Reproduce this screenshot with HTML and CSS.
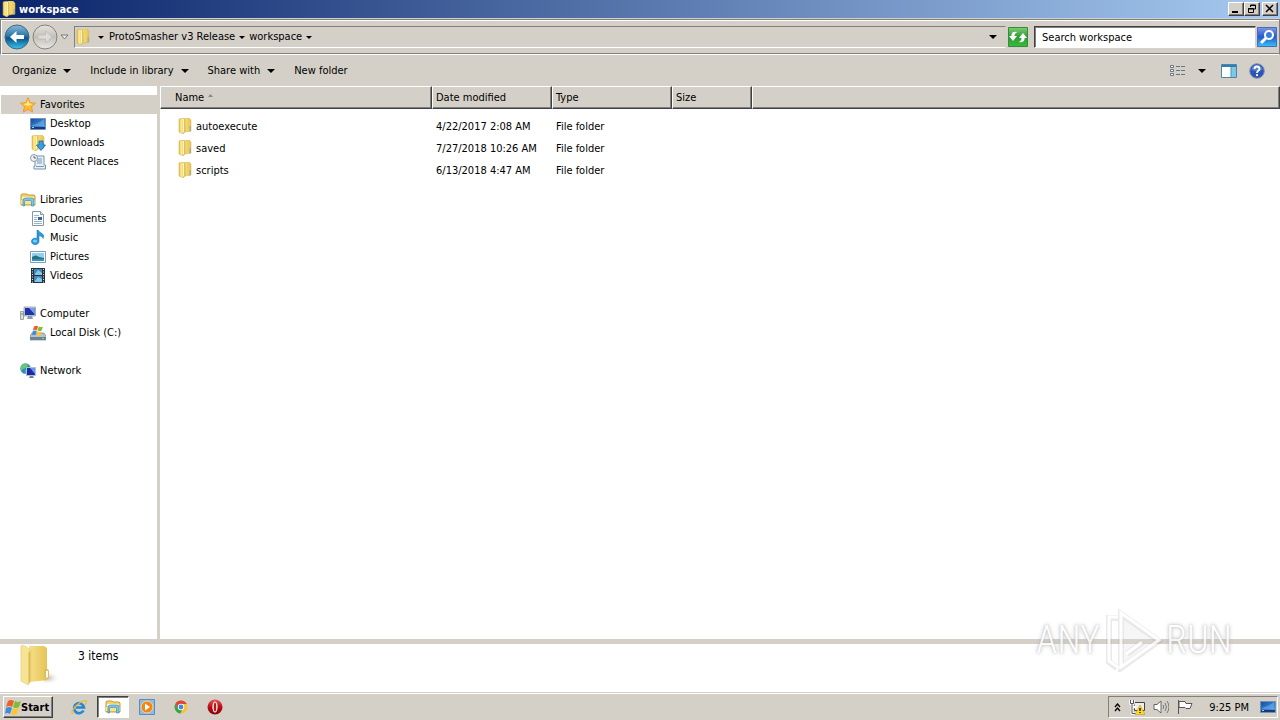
FILE: index.html
```html
<!DOCTYPE html>
<html lang="en">
<head>
<meta charset="utf-8">
<title>workspace</title>
<link rel="stylesheet" href="styles.css">
</head>
<body>
<svg class="defs" aria-hidden="true">
  <defs>
    <linearGradient id="gold" x1="0" x2="1"><stop offset="0" stop-color="#e3bd3c"/><stop offset=".35" stop-color="#fbeb9c"/><stop offset="1" stop-color="#e8c548"/></linearGradient>
    <linearGradient id="goldSoft" x1="0" x2="1"><stop offset="0" stop-color="#f6e08a"/><stop offset="1" stop-color="#e6c355"/></linearGradient>
    <linearGradient id="screen" x1="0" x2="1" y2="1"><stop offset="0" stop-color="#174a9c"/><stop offset="1" stop-color="#56a5ee"/></linearGradient>
    <linearGradient id="green" x1="0" x2="0" y2="1"><stop offset="0" stop-color="#7fcb74"/><stop offset=".5" stop-color="#2c9e34"/><stop offset="1" stop-color="#35bd3b"/></linearGradient>
    <linearGradient id="find" x1="0" x2="0" y2="1"><stop offset="0" stop-color="#8197e6"/><stop offset=".5" stop-color="#2459cf"/><stop offset="1" stop-color="#35c3f5"/></linearGradient>
    <linearGradient id="backFill" x1="0" x2="0" y2="1"><stop offset="0" stop-color="#8db9d6"/><stop offset=".45" stop-color="#2c77ab"/><stop offset=".55" stop-color="#0c5288"/><stop offset="1" stop-color="#39c8ee"/></linearGradient>
    <linearGradient id="fwdFill" x1="0" x2="0" y2="1"><stop offset="0" stop-color="#e6e4e0"/><stop offset=".5" stop-color="#c3c0bb"/><stop offset="1" stop-color="#e9e7e3"/></linearGradient>
    <radialGradient id="shade"><stop offset="0" stop-color="#8f8f8f" stop-opacity=".6"/><stop offset="1" stop-color="#fff" stop-opacity="0"/></radialGradient>
    <linearGradient id="red" x1="0" x2="0" y2="1"><stop offset="0" stop-color="#e8575a"/><stop offset=".5" stop-color="#b90d14"/><stop offset="1" stop-color="#8d0006"/></linearGradient>
  </defs>
  <symbol id="folder" viewBox="0 0 16 16"><path d="M7 0h5l2 2v11l-6 1z" fill="url(#goldSoft)" stroke="#d9b545" stroke-width=".5"/><path d="M2 1l4-1 2 2v12l-2 2-4-2z" fill="url(#gold)" stroke="#cfaa3b" stroke-width=".5"/><path d="M6.500 1v13" stroke="#fff6c6"/><path d="M12.500 8h1.500v5l-1.500 1z" fill="#a9ad92"/></symbol>
  <symbol id="star" viewBox="0 0 16 16"><path d="M8 .7l2.200 4.900 5.300.6-4 3.500 1.200 5.400L8 12.400l-4.700 2.700 1.200-5.400-4-3.500 5.300-.6z" fill="#ffba32" stroke="#e69a3c"/><path d="M8 3l1.500 3.500 3.500.5-5 2-5-2 3.500-.5z" fill="#ffe783"/></symbol>
  <symbol id="desktop" viewBox="0 0 16 16"><path d="M.5 2.500h15v11H.5z" fill="url(#screen)" stroke="#6f93bd"/><path d="M1 11h14v2H1z" fill="#1c3970"/><path d="M2 11h2v1H2z" fill="#8fd6ff"/><path d="M2 9q6-1 12-6v7H2z" fill="#6ebcf6" opacity=".5"/></symbol>
  <symbol id="download" viewBox="0 0 16 16"><use href="#folder"/><path d="M9 6h4v4h2.500L11 15.500 6.500 10H9z" fill="#37a1e4" stroke="#1567a9" stroke-width=".8"/></symbol>
  <symbol id="recent" viewBox="0 0 16 16"><path d="M5 2h9v9h1.500v4H4v-3h1z" fill="#e8f0f6" stroke="#7793ad"/><path d="M7 5h5M7 7h5M7 9h5M6 12.500h8" stroke="#7399b7"/><circle cx="4" cy="4" r="3.500" fill="#eef2f5" stroke="#8a9aa8"/><path d="M4 2v2h2" fill="none" stroke="#526b80"/></symbol>
  <symbol id="library" viewBox="0 0 16 16"><path d="M1 3l1-1h5l1 1h6l1 1v9H1z" fill="#f2d36c" stroke="#c69d32"/><path d="M2 5h12v2H2z" fill="#fff7ca"/><path d="M1 8h14v4H1z" fill="#f8e28e"/><path d="M4.500 14V9.500q0-1 1-1h5q1 0 1 1V14H14V8q0-2-2-2H6Q3 6 3 8v6z" fill="#78c6ef" stroke="#2c83bb" stroke-width=".6"/></symbol>
  <symbol id="document" viewBox="0 0 16 16"><path d="M2.500.5h8l3 3v11h-11z" fill="#fff" stroke="#8497a7"/><path d="M10.500.5v3h3" fill="#dce7ef" stroke="#8497a7"/><path d="M4 4.500h5M4 6.500h3M4 8.500h3M4 10.500h8M4 12.500h8" stroke="#9ab4cc"/><path d="M8 6h4v3H8z" fill="#2f679e"/></symbol>
  <symbol id="music" viewBox="0 0 16 16"><path d="M8 0q1 2 4 3.500 3 2 1 5 0-2-4-3v6a3.800 3.300 0 1 1-2-3V0z" fill="#2998dc" stroke="#126aad" stroke-width=".5"/><ellipse cx="5" cy="11" rx="2" ry="1.500" fill="#7bd0f8"/></symbol>
  <symbol id="picture" viewBox="0 0 16 16"><path d="M.5 2.500h15v11H.5z" fill="#fff" stroke="#859aad"/><path d="M2 4h12v8H2z" fill="#8fd0ef"/><path d="M2 8q4-3 7 0l5 1v3H2z" fill="#267184"/><path d="M2 10h12v2H2z" fill="#2d96bf"/></symbol>
  <symbol id="video" viewBox="0 0 16 16"><path d="M1 0h14v15H1z" fill="#24303c"/><path d="M4 1h8v6H4zM4 8h8v6H4z" fill="#3e87bf"/><path d="M5 6l3-4 4 3v2H5zM5 13l3-4 4 2v3H5z" fill="#87c7e6"/><path d="M2.500 1v14M13.500 1v14" stroke="#dde3e8" stroke-dasharray="1 1.500"/></symbol>
  <symbol id="computer" viewBox="0 0 16 16"><path d="M.5 5.500h3v8h-3z" fill="#d9dedb" stroke="#9ba5a2"/><path d="M1 8h2" stroke="#3fa948"/><path d="M4 1h11.500v9H4z" fill="#ced5dd" stroke="#78848f" stroke-width=".6"/><path d="M5 2h9.500v7H5z" fill="#202fae"/><path d="M9 2h5.500v6z" fill="#6fa1ef"/><path d="M8 10h4l1 3H7z" fill="#8c9aab"/></symbol>
  <symbol id="flag" viewBox="0 0 16 16"><path d="M3 2q3-2 6 0L7 8Q4 6 1 8z" fill="#ed6224"/><path d="M10 2q3 2 6 0l-2 6q-3 2-6 0z" fill="#7cbd3b"/><path d="M1 9q3-2 6 0l-2 6q-3-2-5 0z" fill="#3d8ce4"/><path d="M8 9q3 2 6 0l-2 6q-3 2-6 0z" fill="#fbc72f"/></symbol>
  <symbol id="disk" viewBox="0 0 16 16"><path d="M2 8h12l2 3v4H0v-4z" fill="#b8c2ca" stroke="#65737f" stroke-width=".6"/><path d="M0 12h16v3H0z" fill="#6e8391"/><path d="M12 13h2v1h-2z" fill="#61e26c"/><use href="#flag" x="2" width="11" height="11"/></symbol>
  <symbol id="network" viewBox="0 0 16 16"><circle cx="5.500" cy="5.500" r="5.200" fill="#2c8dcb"/><path d="M2 2q4-3 6 0L6 5 3 6 1 8q-1-3 1-6zM5 7l3 1-2 3z" fill="#68c86c"/><path d="M6.500 4.500h9v8h-9z" fill="#1a2ba3" stroke="#b2c0d0"/><path d="M10 5h5v6z" fill="#6997ef"/><path d="M10 13h3l1 2H9z" fill="#718193"/></symbol>
  <symbol id="arrow" viewBox="0 0 8 4"><path d="M0 0h8L4 4z" fill="#000"/></symbol>
</svg>

<div class="window">
  <header class="titlebar">
    <svg class="icon"><use href="#folder"/></svg>
    <h1 class="title">workspace</h1>
    <div class="caption-buttons">
      <button class="caption" aria-label="Minimize"><svg width="12" height="10"><path d="M2 8h6" stroke="#000" stroke-width="2"/></svg></button>
      <button class="caption" aria-label="Restore"><svg width="12" height="10"><path d="M4.500 3V1h5v4H8M4 1.500h6M2.500 4.500h5v4h-5zM2 5h6" fill="none" stroke="#000"/></svg></button>
      <button class="caption caption-close" aria-label="Close"><svg width="12" height="10"><path d="M2 1l7 7M9 1L2 8" stroke="#000" stroke-width="1.500"/></svg></button>
    </div>
  </header>

  <div class="address-row">
    <button class="plain" aria-label="Back"><svg width="26" height="26"><circle cx="13" cy="13" r="12" fill="url(#backFill)" stroke="#3c6889"/><path d="M6 13l6.500-6v4H20v4h-7.500v4z" fill="#fff"/></svg></button>
    <button class="plain" aria-label="Forward"><svg width="26" height="26"><circle cx="13" cy="13" r="12" fill="url(#fwdFill)" stroke="#85827d"/><path d="M20 13l-6.500-6v4H6v4h7.500v4z" fill="#dedcd7" stroke="#b7b4af" stroke-width=".6"/></svg></button>
    <button class="plain history" aria-label="Recent pages"><svg width="9" height="6"><path d="M1 1h7L4.500 5z" fill="#eee" stroke="#777"/></svg></button>
    <nav class="breadcrumb" aria-label="Address">
      <svg class="icon"><use href="#folder"/></svg>
      <button class="plain crumb-arrow" aria-label="Root"><svg class="small-arrow"><use href="#arrow"/></svg></button>
      <a class="crumb" href="#">ProtoSmasher v3 Release</a>
      <button class="plain crumb-arrow" aria-label="Subfolders of ProtoSmasher v3 Release"><svg class="small-arrow"><use href="#arrow"/></svg></button>
      <a class="crumb" href="#">workspace</a>
      <button class="plain crumb-arrow" aria-label="Subfolders of workspace"><svg class="small-arrow"><use href="#arrow"/></svg></button>
      <button class="plain address-drop" aria-label="Previous locations"><svg class="big-arrow"><use href="#arrow"/></svg></button>
    </nav>
    <button class="plain refresh" aria-label="Refresh"><svg width="20" height="20"><path d="M.5.5h19v19H.5z" fill="url(#green)" stroke="#388a3c"/><path d="M1 9l4 5 4-5H6.500q0-3 3-4Q3 4 3.500 9zM19 11l-4-5-4 5h2.500q0 3-3 4 6.500 1 6-4z" fill="#fff"/></svg></button>
    <input class="search" type="text" aria-label="Search" value="Search workspace">
    <button class="plain find" aria-label="Start search"><svg width="20" height="20"><path d="M.5.5h19v19H.5z" fill="url(#find)" stroke="#466cc2"/><path d="M9 11l-5 5" stroke="#fff" stroke-width="3"/><circle cx="12" cy="8" r="4" fill="#397ddc" stroke="#fff" stroke-width="2"/></svg></button>
  </div>

  <div class="toolbar">
    <button class="plain tool">Organize <svg class="big-arrow"><use href="#arrow"/></svg></button>
    <button class="plain tool">Include in library <svg class="big-arrow"><use href="#arrow"/></svg></button>
    <button class="plain tool">Share with <svg class="big-arrow"><use href="#arrow"/></svg></button>
    <button class="plain tool">New folder</button>
    <div class="view-tools">
      <button class="plain" aria-label="Change your view"><svg width="16" height="14"><path d="M.5 1.500h3v2h-3zM.5 5.500h3v2h-3zM.5 9.500h3v2h-3z" fill="#fff" stroke="#66758a"/><path d="M6 2.500h4m1 0h4M6 6.500h4m1 0h4M6 10.500h4m1 0h4" stroke="#66758a"/></svg></button>
      <button class="plain view-drop" aria-label="More view options"><svg class="big-arrow"><use href="#arrow"/></svg></button>
      <button class="plain preview" aria-label="Show the preview pane"><svg width="16" height="14"><path d="M.5.5h15v13H.5z" fill="#fff" stroke="#4a84a8"/><path d="M1 2h14" stroke="#347caf" stroke-width="2"/><path d="M10 3h5v10h-5z" fill="#7fc7e8"/><path d="M10 3v10" stroke="#4a94bb"/></svg></button>
      <button class="plain help" aria-label="Help"><svg width="16" height="16"><circle cx="8" cy="8" r="7.300" fill="#2855b8" stroke="#8393b0"/><path d="M2.500 7a5.500 5 0 0 1 11 0q-5 2-11 0z" fill="#7b9fe3" opacity=".6"/><path d="M5.500 6q0-2.500 2.500-2.500T10.500 6Q10.500 7 9 8q-1 .7-1 2" fill="none" stroke="#fff" stroke-width="1.800"/><path d="M7 11.300h2v1.700H7z" fill="#fff"/></svg></button>
    </div>
  </div>

  <main class="content">
    <nav class="tree" aria-label="Folders">
      <ul class="group">
        <li><a class="node root selected" href="#"><svg class="icon"><use href="#star"/></svg>Favorites</a></li>
        <li><a class="node" href="#"><svg class="icon"><use href="#desktop"/></svg>Desktop</a></li>
        <li><a class="node" href="#"><svg class="icon"><use href="#download"/></svg>Downloads</a></li>
        <li><a class="node" href="#"><svg class="icon"><use href="#recent"/></svg>Recent Places</a></li>
      </ul>
      <ul class="group">
        <li><a class="node root" href="#"><svg class="icon"><use href="#library"/></svg>Libraries</a></li>
        <li><a class="node" href="#"><svg class="icon"><use href="#document"/></svg>Documents</a></li>
        <li><a class="node" href="#"><svg class="icon"><use href="#music"/></svg>Music</a></li>
        <li><a class="node" href="#"><svg class="icon"><use href="#picture"/></svg>Pictures</a></li>
        <li><a class="node" href="#"><svg class="icon"><use href="#video"/></svg>Videos</a></li>
      </ul>
      <ul class="group">
        <li><a class="node root" href="#"><svg class="icon"><use href="#computer"/></svg>Computer</a></li>
        <li><a class="node" href="#"><svg class="icon"><use href="#disk"/></svg>Local Disk (C:)</a></li>
      </ul>
      <ul class="group">
        <li><a class="node root" href="#"><svg class="icon"><use href="#network"/></svg>Network</a></li>
      </ul>
    </nav>

    <section class="files">
      <table class="list">
        <colgroup><col class="col-name"><col class="col-mid"><col class="col-mid"><col class="col-size"><col></colgroup>
        <thead>
          <tr><th class="name-head">Name <svg class="sort" width="5" height="3"><path d="M0 3h5L2.500 0z" fill="#8c8982"/></svg></th><th>Date modified</th><th>Type</th><th>Size</th><th></th></tr>
        </thead>
        <tbody>
          <tr><td><a class="file" href="#"><svg class="icon"><use href="#folder"/></svg>autoexecute</a></td><td>4/22/2017 2:08 AM</td><td>File folder</td><td></td><td></td></tr>
          <tr><td><a class="file" href="#"><svg class="icon"><use href="#folder"/></svg>saved</a></td><td>7/27/2018 10:26 AM</td><td>File folder</td><td></td><td></td></tr>
          <tr><td><a class="file" href="#"><svg class="icon"><use href="#folder"/></svg>scripts</a></td><td>6/13/2018 4:47 AM</td><td>File folder</td><td></td><td></td></tr>
        </tbody>
      </table>
    </section>
  </main>

  <section class="details">
    <svg width="42" height="44" viewBox="0 0 42 44"><ellipse cx="29" cy="34" rx="12" ry="7" fill="url(#shade)"/><path d="M10 2h15l3 2v32l-17 2z" fill="url(#goldSoft)"/><path d="M25 25q5-1 5 3v6l-4 3z" fill="#e0bd55"/><path d="M27 27h2v6l-2 1z" fill="#fff"/><path d="M2 2l2-1 8 5v31l-3 4-7-4z" fill="#f7e394" stroke="#ecd27c" stroke-width=".8"/><path d="M11.500 6v31l-2 3V9z" fill="#dcb94f"/></svg>
    <p class="count">3 items</p>
  </section>

  <div class="watermark">
    <span>ANY</span>
    <svg width="60" height="64"><path d="M18 6l38 27-38 27zM16 10H6v44l8 6M24 46l16-12" fill="none" stroke="#999" stroke-width="6" opacity=".25"/><path d="M20 8l34 24-34 24z" fill="#ddd" opacity=".3"/><path d="M18 5l38 27-38 27zM15 9H6v44l10 7M23 46l16-12" fill="none" stroke="#fff" stroke-width="3"/></svg>
    <span>RUN</span>
  </div>
</div>

<footer class="taskbar">
  <button class="start"><svg class="icon"><use href="#flag"/></svg>Start</button>
  <div class="launch">
    <button class="plain task" aria-label="Internet Explorer"><svg class="icon" viewBox="0 0 16 16"><path d="M12.500 11.500A5 5 0 1 1 13 8.500H5" fill="none" stroke="#2488d8" stroke-width="2.600"/><path d="M2 15Q-1 13 5 7q7-7 10-5 1 1-1 4" fill="none" stroke="#f1bb30" stroke-width="1.300"/></svg></button>
    <button class="plain task active" aria-label="Windows Explorer"><svg class="icon"><use href="#library"/></svg></button>
    <button class="plain task" aria-label="Media Player"><svg class="icon" viewBox="0 0 16 16"><path d="M.5.5h15v15H.5z" fill="#8bbce7" stroke="#5190c7"/><circle cx="8" cy="8" r="6" fill="#f18717" stroke="#fbd39b"/><path d="M6 4.500l5 3.500-5 3.500z" fill="#fff"/></svg></button>
    <button class="plain task" aria-label="Chrome"><svg class="icon" viewBox="0 0 16 16"><circle cx="8" cy="8" r="6.500" fill="#f6c52d"/><path d="M2.400 4.800A6.500 6.500 0 0 1 13.800 5H8a3 3 0 0 0-2.700 4.500z" fill="#df4435"/><path d="M2.400 4.800l3 4.800A3 3 0 0 0 9 11l-1.500 3.500A6.500 6.500 0 0 1 2.400 4.800z" fill="#35a353"/><circle cx="8" cy="8" r="3.200" fill="#fff"/><circle cx="8" cy="8" r="2.400" fill="#4385ec"/></svg></button>
    <button class="plain task" aria-label="Opera"><svg class="icon" viewBox="0 0 16 16"><circle cx="8" cy="8" r="7.500" fill="url(#red)"/><ellipse cx="8" cy="8" rx="2.600" ry="5.500" fill="#fff"/><ellipse cx="8" cy="8" rx="1.300" ry="4.500" fill="#b61820"/></svg></button>
  </div>
  <div class="tray">
    <button class="plain" aria-label="Show hidden icons"><svg width="7" height="9"><path d="M1 4l2.500-3L6 4M1 8l2.500-3L6 8" fill="none" stroke="#000" stroke-width="1.300"/></svg></button>
    <button class="plain" aria-label="Network status"><svg class="icon" viewBox="0 0 16 16"><path d="M5.500 3.500h10v8h-10z" fill="#eee" stroke="#444"/><path d="M1.500 1v3.500h3V1M3 5v9.500h7M3 8h4" fill="none" stroke="#fff" stroke-width="2.500"/><path d="M1.500 1v3.500h3V1M3 5v9.500h7" fill="none" stroke="#555"/><path d="M11 6l5 9.500H6z" fill="#ffdc24" stroke="#bf960b" stroke-width=".6"/><path d="M11 9v3m0 1v1" stroke="#000" stroke-width="1.300"/></svg></button>
    <button class="plain" aria-label="Volume"><svg class="icon" viewBox="0 0 16 16"><path d="M1 5.500h3L8 2v12l-4-3.500H1z" fill="#fff" stroke="#666"/><path d="M10 6q1.500 2 0 4m2-6q3 4 0 8m2-10q4 6 0 12" fill="none" stroke="#777"/></svg></button>
    <button class="plain" aria-label="Action Center"><svg class="icon" viewBox="0 0 16 16"><path d="M1.500 1v14" stroke="#555"/><path d="M2 2.500h6l1 2h6l-2 5H9l-1-1H2z" fill="#fff" stroke="#555"/></svg></button>
    <time class="clock">9:25 PM</time>
    <button class="plain" aria-label="Show desktop"><svg class="icon"><use href="#desktop"/></svg></button>
  </div>
</footer>
</body>
</html>
```

FILE: styles.css
```css
* { box-sizing: border-box; }

body {
  margin: 0;
  min-height: 100vh;
  display: flex;
  flex-direction: column;
  background: #d4d0c8;
  color: #000;
  font: 11px/15px Tahoma, "DejaVu Sans Condensed", "DejaVu Sans", sans-serif;
}

a { color: inherit; text-decoration: none; }
ul { list-style: none; margin: 0; padding: 0; }
svg { display: block; flex: none; }
button, input { font: inherit; color: inherit; }

.defs { position: absolute; width: 0; height: 0; }
.icon { width: 16px; height: 16px; }
.small-arrow { width: 6px; height: 3px; }
.big-arrow { width: 8px; height: 4px; }

.plain {
  display: flex;
  align-items: center;
  padding: 0;
  border: 0;
  background: none;
}

.window {
  position: relative;
  flex: 1;
  display: flex;
  flex-direction: column;
}

.titlebar {
  display: flex;
  align-items: center;
  height: 18px;
  padding: 0 2px 0 1px;
  gap: 2px;
  background: linear-gradient(to right, #0a246a, #a6caf0);
}
.title { flex: 1; margin: 0; color: #fff; font-size: 11px; line-height: 15px; }
.caption-buttons { display: flex; }
.caption {
  width: 16px;
  height: 14px;
  padding: 1px;
  border: 1px solid;
  border-color: #fff #404040 #404040 #fff;
  background: #d4d0c8;
  box-shadow: inset -1px -1px #808080;
}
.caption-close { margin-left: 2px; }

.address-row {
  display: flex;
  align-items: center;
  height: 36px;
  margin: 1px 0 0;
  padding: 0 2px 0 3px;
  border: 1px solid #808080;
  border-bottom-color: #fff;
  box-shadow: inset 1px 1px #fff, inset 0 -1px #808080;
  gap: 2px;
}
.history { width: 11px; }
.breadcrumb {
  flex: 1;
  display: flex;
  align-items: center;
  height: 22px;
  margin-left: 1px;
  border: 1px solid;
  border-color: #808080 #d4d0c8 #fff #808080;
  line-height: 14px;
}
.crumb-arrow { padding: 0 4px; }
.icon + .crumb-arrow { padding: 0 5px 0 7px; }
.address-drop { margin-left: auto; padding: 0 8px; }
.refresh { margin-right: 4px; }
.search {
  width: 222px;
  height: 22px;
  padding: 0 7px;
  border: 1px solid;
  border-color: #404040 #d4d0c8 #fff #404040;
  border-radius: 0;
  background: #fff;
  box-shadow: inset 1px 1px #808080;
  outline: 0;
}
.find { margin-left: -1px; }

.toolbar {
  display: flex;
  align-items: center;
  height: 31px;
  padding: 0 15px 0 12px;
  gap: 19px;
}
.tool { gap: 7px; }
.view-tools { display: flex; align-items: center; margin-left: auto; }
.view-drop { margin-left: 12px; }
.preview { margin-left: 15px; }
.help { margin-left: 12px; }

.content { flex: 1; display: flex; background: #fff; }
.tree {
  width: 160px;
  padding-top: 9px;
  border-right: 3px solid #d4d0c8;
}
.group { margin-bottom: 19px; }
.node {
  display: flex;
  align-items: center;
  height: 19px;
  padding-left: 30px;
  gap: 4px;
}
.node.root { padding-left: 20px; }
.node.selected { margin-left: 1px; padding-left: 19px; background: #d4d0c8; }

.files { flex: 1; }
.list { width: 100%; table-layout: fixed; border-collapse: separate; border-spacing: 0; }
.col-name { width: 272px; }
.col-mid { width: 120px; }
.col-size { width: 80px; }
.list th {
  height: 23px;
  padding: 0 3px;
  border: 1px solid;
  border-color: #fff #404040 #404040 #fff;
  background: #d4d0c8;
  box-shadow: inset -1px -1px #808080;
  font-weight: normal;
  text-align: left;
}
.list .name-head { padding-left: 14px; }
.sort { display: inline-block; margin: 0 0 4px 1px; }
.list tbody::before { content: ""; display: block; height: 6px; }
.list td { height: 22px; padding: 0 4px; }
.list td:first-child { padding-left: 17px; }
.file { display: flex; align-items: center; gap: 3px; }

.details {
  display: flex;
  height: 54px;
  padding-left: 19px;
  gap: 17px;
  border-top: 5px solid #d4d0c8;
  border-bottom: 1px solid #d4d0c8;
  background: #fff;
}
.count { margin: 5px 0 0; font-size: 12px; line-height: 15px; }

.watermark {
  position: absolute;
  right: 48px;
  bottom: 21px;
  display: flex;
  align-items: center;
  gap: 3px;
  color: #fff;
  font: 300 38px/48px "Roboto Condensed", Roboto, sans-serif;
  text-shadow: 0 0 4px #aaa, 0 0 2px #bbb;
  opacity: .8;
  pointer-events: none;
}

.taskbar {
  display: flex;
  align-items: center;
  height: 27px;
  padding: 0 2px 0 3px;
  border-top: 1px solid #fff;
  background: #d4d0c8;
}
.start {
  display: flex;
  align-items: center;
  height: 22px;
  padding: 0 3px 0 1px;
  border: 1px solid;
  border-color: #fff #404040 #404040 #fff;
  background: #d4d0c8;
  box-shadow: inset -1px -1px #808080;
  font-weight: bold;
}
.launch { display: flex; margin-left: 10px; gap: 2px; }
.task { justify-content: center; width: 32px; height: 22px; }
.task.active {
  border: 1px solid;
  border-color: #404040 #fff #fff #404040;
  background: #fff;
  box-shadow: inset 1px 1px #808080;
}
.tray {
  display: flex;
  align-items: center;
  height: 22px;
  margin-left: auto;
  padding: 0 1px 0 5px;
  gap: 8px;
  border: 1px solid;
  border-color: #808080 #fff #fff #808080;
}
.clock { margin: 0 3px 0 8px; }
```
